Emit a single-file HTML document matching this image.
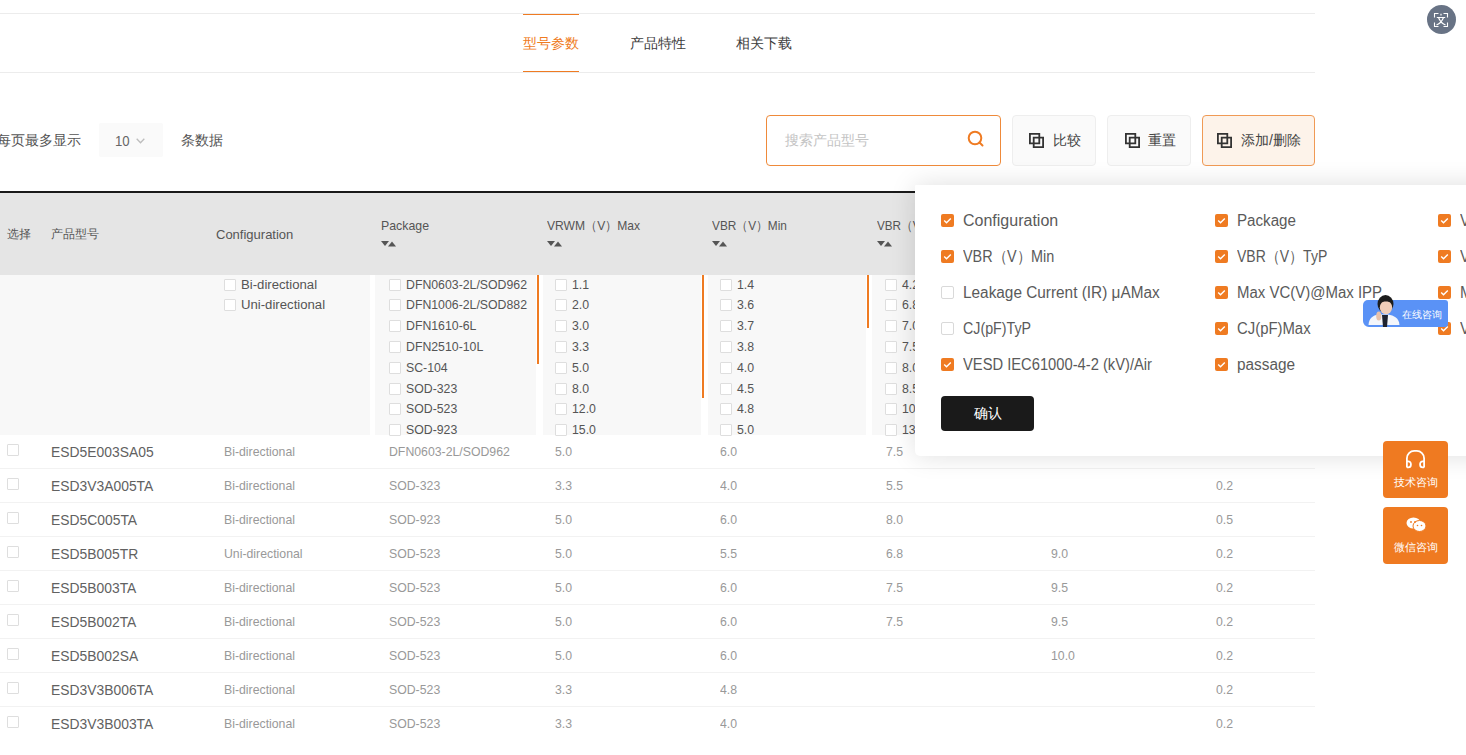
<!DOCTYPE html>
<html><head><meta charset="utf-8"><style>
*{box-sizing:border-box;margin:0;padding:0}
html,body{width:1466px;height:755px;overflow:hidden;background:#fff;font-family:"Liberation Sans",sans-serif;color:#555}
.a{position:absolute;white-space:nowrap}
.hline{position:absolute;height:1px;background:#ececec}
.tab{position:absolute;top:35px;font-size:14px;line-height:16px;color:#3c3c3c}
.tab.on{color:#ef7b22}
.btn{position:absolute;top:115px;height:51px;border:1px solid #eeeeee;border-radius:4px;background:#fafafa;font-size:14px;color:#444}
.btn svg{position:absolute;top:16px}
.btn span{position:absolute;top:16px;line-height:16px;white-space:nowrap}
.htxt{position:absolute;font-size:13px;line-height:15px;color:#555;white-space:nowrap}
.sort{position:absolute;line-height:0}.sort svg{display:block}
.fi{position:absolute;font-size:12.3px;line-height:14px;color:#555;white-space:nowrap}
.cb{position:absolute;width:12px;height:12px;border:1px solid #dedede;background:#fff;border-radius:1px}
.row{position:absolute;left:0;width:1315px;height:34px;border-bottom:1px solid #f2f2f2}
.cell{position:absolute;top:8.8px;font-size:12.8px;line-height:15px;color:#999;transform:scaleX(0.96);transform-origin:0 0;white-space:nowrap}
.model{position:absolute;top:7.5px;left:51px;font-size:15px;line-height:17px;color:#616161;transform:scaleX(0.925);transform-origin:0 0;white-space:nowrap}
.pi{position:absolute;font-size:16px;line-height:18px;color:#5a5a5a;white-space:nowrap}
.pcb{position:absolute;width:13px;height:13px;border-radius:2px;background:#ef7b22}
.pcb.off{background:#fff;border:1px solid #d9d9d9}
.fb{position:absolute;left:1383px;width:65px;height:57px;border-radius:4px;background:#ef7a21;color:#fff;font-size:10px}
</style></head><body>
<div class="hline" style="left:0;top:13px;width:1315px"></div>
<div class="hline" style="left:0;top:72px;width:1315px"></div>
<div class="a" style="left:523px;top:14px;width:56px;height:1px;background:#ef7b22"></div>
<div class="a" style="left:523px;top:71px;width:56px;height:1px;background:#ef7b22"></div>
<div class="tab on" style="left:523px">型号参数</div>
<div class="tab" style="left:630px">产品特性</div>
<div class="tab" style="left:736px">相关下载</div>
<div class="a" style="left:1427px;top:5px;width:29px;height:29px;border-radius:50%;background:#687385"></div>
<svg class="a" style="left:1433px;top:12px" width="16" height="16" viewBox="0 0 16 16" fill="none" stroke="#fff" stroke-width="1.1">
<path d="M1.5 5.5V1.5H5.5M10.5 1.5h4v4M14.5 10.5v4h-4M5.5 14.5h-4v-4"/><path d="M8 1.8v1.6M3.8 5.5h8.4M5.6 5.8C7 9.5 9 11.5 12.5 13M10.4 5.8C9 9.5 7 11.5 3.5 13" stroke-width="1.2"/></svg>
<div class="a" style="left:-3px;top:132px;font-size:14px;line-height:16px;color:#555">每页最多显示</div>
<div class="a" style="left:99px;top:123px;width:64px;height:34px;background:#fafafa;border-radius:2px"></div>
<div class="a" style="left:115px;top:131.5px;font-size:15.5px;line-height:18px;color:#666;transform:scaleX(0.85);transform-origin:0 0">10</div>
<svg class="a" style="left:136px;top:138px" width="9" height="6" viewBox="0 0 9 6" fill="none" stroke="#bdbdbd" stroke-width="1.3"><path d="M.7 .8 4.5 4.8 8.3 .8"/></svg>
<div class="a" style="left:181px;top:132px;font-size:14px;line-height:16px;color:#555">条数据</div>
<div class="a" style="left:766px;top:115px;width:235px;height:51px;border:1px solid #ef8a3a;border-radius:4px;background:#fff"></div>
<div class="a" style="left:785px;top:132px;font-size:14px;line-height:16px;color:#c4c4c4">搜索产品型号</div>
<svg class="a" style="left:967px;top:130px" width="18" height="17" viewBox="0 0 18 17" fill="none" stroke="#ef7b22" stroke-width="2"><circle cx="8" cy="8" r="6.3"/><path d="M12.5 12.5 15.5 15.5" stroke-linecap="round"/></svg>
<div class="btn" style="left:1012px;width:84px;"><svg style="left:16px;top:17px" width="15" height="15" viewBox="0 0 15 15" fill="none" stroke="#333" stroke-width="1.8"><path d="M.9 .9h9.4v9.4H.9zM4.7 4.7h9.4v9.4H4.7z"/></svg><span style="left:40px">比较</span></div>
<div class="btn" style="left:1107px;width:84px;"><svg style="left:17px;top:17px" width="15" height="15" viewBox="0 0 15 15" fill="none" stroke="#333" stroke-width="1.8"><path d="M.9 .9h9.4v9.4H.9zM4.7 4.7h9.4v9.4H4.7z"/></svg><span style="left:40px">重置</span></div>
<div class="btn" style="left:1202px;width:113px;border-color:#f09a55;background:#fdf3ea"><svg style="left:14px;top:17px" width="15" height="15" viewBox="0 0 15 15" fill="none" stroke="#333" stroke-width="1.8"><path d="M.9 .9h9.4v9.4H.9zM4.7 4.7h9.4v9.4H4.7z"/></svg><span style="left:38px">添加/删除</span></div>
<div class="a" style="left:0;top:191px;width:1315px;height:2px;background:#1a1a1a"></div>
<div class="a" style="left:0;top:193px;width:1315px;height:82px;background:#e5e5e5"></div>
<div class="a" style="left:0;top:275px;width:1315px;height:160px;background:#f8f8f8"></div>
<div class="htxt" style="left:7px;top:227px;font-size:12px">选择</div>
<div class="htxt" style="left:51px;top:227px;font-size:12px">产品型号</div>
<div class="htxt" style="left:216px;top:227px">Configuration</div>
<div class="htxt" style="left:381px;top:218px;transform:scaleX(0.95);transform-origin:0 0">Package</div>
<div class="sort" style="left:381px;top:240.5px"><svg width="16" height="6" viewBox="0 0 16 6"><path d="M0 0h8L4 5z" fill="#555"/><path d="M7 5.5 11 0.5 15 5.5z" fill="#555"/></svg></div>
<div class="htxt" style="left:547px;top:218px;transform:scaleX(0.93);transform-origin:0 0">VRWM（V）Max</div>
<div class="sort" style="left:547px;top:240.5px"><svg width="16" height="6" viewBox="0 0 16 6"><path d="M0 0h8L4 5z" fill="#555"/><path d="M7 5.5 11 0.5 15 5.5z" fill="#555"/></svg></div>
<div class="htxt" style="left:712px;top:218px;transform:scaleX(0.91);transform-origin:0 0">VBR（V）Min</div>
<div class="sort" style="left:712px;top:240.5px"><svg width="16" height="6" viewBox="0 0 16 6"><path d="M0 0h8L4 5z" fill="#555"/><path d="M7 5.5 11 0.5 15 5.5z" fill="#555"/></svg></div>
<div class="htxt" style="left:877px;top:218px;transform:scaleX(0.9);transform-origin:0 0">VBR（V）TyP</div>
<div class="sort" style="left:877px;top:240.5px"><svg width="16" height="6" viewBox="0 0 16 6"><path d="M0 0h8L4 5z" fill="#555"/><path d="M7 5.5 11 0.5 15 5.5z" fill="#555"/></svg></div>
<div class="htxt" style="left:1042px;top:218px;transform:scaleX(1);transform-origin:0 0">VC</div>
<div class="sort" style="left:1042px;top:240.5px"><svg width="16" height="6" viewBox="0 0 16 6"><path d="M0 0h8L4 5z" fill="#555"/><path d="M7 5.5 11 0.5 15 5.5z" fill="#555"/></svg></div>
<div class="htxt" style="left:1207px;top:218px;transform:scaleX(1);transform-origin:0 0">IPP</div>
<div class="sort" style="left:1207px;top:240.5px"><svg width="16" height="6" viewBox="0 0 16 6"><path d="M0 0h8L4 5z" fill="#555"/><path d="M7 5.5 11 0.5 15 5.5z" fill="#555"/></svg></div>
<div class="a" style="left:369.5px;top:275px;width:5px;height:160px;background:#fff"></div>
<div class="a" style="left:536px;top:275px;width:6.5px;height:160px;background:#fff"></div>
<div class="a" style="left:701px;top:275px;width:6.5px;height:160px;background:#fff"></div>
<div class="a" style="left:865.5px;top:275px;width:6.5px;height:160px;background:#fff"></div>
<div class="a" style="left:1031px;top:275px;width:6.5px;height:160px;background:#fff"></div>
<div class="a" style="left:536.5px;top:275px;width:2px;height:89px;background:#ef7b22"></div>
<div class="a" style="left:702px;top:275px;width:2px;height:123px;background:#ef7b22"></div>
<div class="a" style="left:867px;top:275px;width:2px;height:53px;background:#ef7b22"></div>
<div class="cb" style="left:224px;top:278.5px"></div>
<div class="fi" style="left:241px;top:277.5px;transform:scaleX(1.07);transform-origin:0 0">Bi-directional</div>
<div class="cb" style="left:224px;top:299.3px"></div>
<div class="fi" style="left:241px;top:298.3px;transform:scaleX(1.07);transform-origin:0 0">Uni-directional</div>
<div class="cb" style="left:389px;top:278.5px"></div>
<div class="fi" style="left:406px;top:277.5px;transform:scaleX(1.0);transform-origin:0 0">DFN0603-2L/SOD962</div>
<div class="cb" style="left:389px;top:299.3px"></div>
<div class="fi" style="left:406px;top:298.3px;transform:scaleX(1.0);transform-origin:0 0">DFN1006-2L/SOD882</div>
<div class="cb" style="left:389px;top:320.1px"></div>
<div class="fi" style="left:406px;top:319.1px;transform:scaleX(1.0);transform-origin:0 0">DFN1610-6L</div>
<div class="cb" style="left:389px;top:340.9px"></div>
<div class="fi" style="left:406px;top:339.9px;transform:scaleX(1.0);transform-origin:0 0">DFN2510-10L</div>
<div class="cb" style="left:389px;top:361.7px"></div>
<div class="fi" style="left:406px;top:360.7px;transform:scaleX(1.0);transform-origin:0 0">SC-104</div>
<div class="cb" style="left:389px;top:382.5px"></div>
<div class="fi" style="left:406px;top:381.5px;transform:scaleX(1.0);transform-origin:0 0">SOD-323</div>
<div class="cb" style="left:389px;top:403.3px"></div>
<div class="fi" style="left:406px;top:402.3px;transform:scaleX(1.0);transform-origin:0 0">SOD-523</div>
<div class="cb" style="left:389px;top:424.1px"></div>
<div class="fi" style="left:406px;top:423.1px;transform:scaleX(1.0);transform-origin:0 0">SOD-923</div>
<div class="cb" style="left:555px;top:278.5px"></div>
<div class="fi" style="left:572px;top:277.5px;transform:scaleX(1.0);transform-origin:0 0">1.1</div>
<div class="cb" style="left:555px;top:299.3px"></div>
<div class="fi" style="left:572px;top:298.3px;transform:scaleX(1.0);transform-origin:0 0">2.0</div>
<div class="cb" style="left:555px;top:320.1px"></div>
<div class="fi" style="left:572px;top:319.1px;transform:scaleX(1.0);transform-origin:0 0">3.0</div>
<div class="cb" style="left:555px;top:340.9px"></div>
<div class="fi" style="left:572px;top:339.9px;transform:scaleX(1.0);transform-origin:0 0">3.3</div>
<div class="cb" style="left:555px;top:361.7px"></div>
<div class="fi" style="left:572px;top:360.7px;transform:scaleX(1.0);transform-origin:0 0">5.0</div>
<div class="cb" style="left:555px;top:382.5px"></div>
<div class="fi" style="left:572px;top:381.5px;transform:scaleX(1.0);transform-origin:0 0">8.0</div>
<div class="cb" style="left:555px;top:403.3px"></div>
<div class="fi" style="left:572px;top:402.3px;transform:scaleX(1.0);transform-origin:0 0">12.0</div>
<div class="cb" style="left:555px;top:424.1px"></div>
<div class="fi" style="left:572px;top:423.1px;transform:scaleX(1.0);transform-origin:0 0">15.0</div>
<div class="cb" style="left:720px;top:278.5px"></div>
<div class="fi" style="left:737px;top:277.5px;transform:scaleX(1.0);transform-origin:0 0">1.4</div>
<div class="cb" style="left:720px;top:299.3px"></div>
<div class="fi" style="left:737px;top:298.3px;transform:scaleX(1.0);transform-origin:0 0">3.6</div>
<div class="cb" style="left:720px;top:320.1px"></div>
<div class="fi" style="left:737px;top:319.1px;transform:scaleX(1.0);transform-origin:0 0">3.7</div>
<div class="cb" style="left:720px;top:340.9px"></div>
<div class="fi" style="left:737px;top:339.9px;transform:scaleX(1.0);transform-origin:0 0">3.8</div>
<div class="cb" style="left:720px;top:361.7px"></div>
<div class="fi" style="left:737px;top:360.7px;transform:scaleX(1.0);transform-origin:0 0">4.0</div>
<div class="cb" style="left:720px;top:382.5px"></div>
<div class="fi" style="left:737px;top:381.5px;transform:scaleX(1.0);transform-origin:0 0">4.5</div>
<div class="cb" style="left:720px;top:403.3px"></div>
<div class="fi" style="left:737px;top:402.3px;transform:scaleX(1.0);transform-origin:0 0">4.8</div>
<div class="cb" style="left:720px;top:424.1px"></div>
<div class="fi" style="left:737px;top:423.1px;transform:scaleX(1.0);transform-origin:0 0">5.0</div>
<div class="cb" style="left:885px;top:278.5px"></div>
<div class="fi" style="left:902px;top:277.5px;transform:scaleX(1.0);transform-origin:0 0">4.2</div>
<div class="cb" style="left:885px;top:299.3px"></div>
<div class="fi" style="left:902px;top:298.3px;transform:scaleX(1.0);transform-origin:0 0">6.8</div>
<div class="cb" style="left:885px;top:320.1px"></div>
<div class="fi" style="left:902px;top:319.1px;transform:scaleX(1.0);transform-origin:0 0">7.0</div>
<div class="cb" style="left:885px;top:340.9px"></div>
<div class="fi" style="left:902px;top:339.9px;transform:scaleX(1.0);transform-origin:0 0">7.5</div>
<div class="cb" style="left:885px;top:361.7px"></div>
<div class="fi" style="left:902px;top:360.7px;transform:scaleX(1.0);transform-origin:0 0">8.0</div>
<div class="cb" style="left:885px;top:382.5px"></div>
<div class="fi" style="left:902px;top:381.5px;transform:scaleX(1.0);transform-origin:0 0">8.5</div>
<div class="cb" style="left:885px;top:403.3px"></div>
<div class="fi" style="left:902px;top:402.3px;transform:scaleX(1.0);transform-origin:0 0">10.0</div>
<div class="cb" style="left:885px;top:424.1px"></div>
<div class="fi" style="left:902px;top:423.1px;transform:scaleX(1.0);transform-origin:0 0">13.0</div>
<div class="row" style="top:435px">
<div class="cb" style="left:7px;top:9px"></div>
<div class="model">ESD5E003SA05</div>
<div class="cell" style="left:224px">Bi-directional</div>
<div class="cell" style="left:389px">DFN0603-2L/SOD962</div>
<div class="cell" style="left:555px">5.0</div>
<div class="cell" style="left:720px">6.0</div>
<div class="cell" style="left:886px">7.5</div>
</div>
<div class="row" style="top:469px">
<div class="cb" style="left:7px;top:9px"></div>
<div class="model">ESD3V3A005TA</div>
<div class="cell" style="left:224px">Bi-directional</div>
<div class="cell" style="left:389px">SOD-323</div>
<div class="cell" style="left:555px">3.3</div>
<div class="cell" style="left:720px">4.0</div>
<div class="cell" style="left:886px">5.5</div>
<div class="cell" style="left:1216px">0.2</div>
</div>
<div class="row" style="top:503px">
<div class="cb" style="left:7px;top:9px"></div>
<div class="model">ESD5C005TA</div>
<div class="cell" style="left:224px">Bi-directional</div>
<div class="cell" style="left:389px">SOD-923</div>
<div class="cell" style="left:555px">5.0</div>
<div class="cell" style="left:720px">6.0</div>
<div class="cell" style="left:886px">8.0</div>
<div class="cell" style="left:1216px">0.5</div>
</div>
<div class="row" style="top:537px">
<div class="cb" style="left:7px;top:9px"></div>
<div class="model">ESD5B005TR</div>
<div class="cell" style="left:224px">Uni-directional</div>
<div class="cell" style="left:389px">SOD-523</div>
<div class="cell" style="left:555px">5.0</div>
<div class="cell" style="left:720px">5.5</div>
<div class="cell" style="left:886px">6.8</div>
<div class="cell" style="left:1051px">9.0</div>
<div class="cell" style="left:1216px">0.2</div>
</div>
<div class="row" style="top:571px">
<div class="cb" style="left:7px;top:9px"></div>
<div class="model">ESD5B003TA</div>
<div class="cell" style="left:224px">Bi-directional</div>
<div class="cell" style="left:389px">SOD-523</div>
<div class="cell" style="left:555px">5.0</div>
<div class="cell" style="left:720px">6.0</div>
<div class="cell" style="left:886px">7.5</div>
<div class="cell" style="left:1051px">9.5</div>
<div class="cell" style="left:1216px">0.2</div>
</div>
<div class="row" style="top:605px">
<div class="cb" style="left:7px;top:9px"></div>
<div class="model">ESD5B002TA</div>
<div class="cell" style="left:224px">Bi-directional</div>
<div class="cell" style="left:389px">SOD-523</div>
<div class="cell" style="left:555px">5.0</div>
<div class="cell" style="left:720px">6.0</div>
<div class="cell" style="left:886px">7.5</div>
<div class="cell" style="left:1051px">9.5</div>
<div class="cell" style="left:1216px">0.2</div>
</div>
<div class="row" style="top:639px">
<div class="cb" style="left:7px;top:9px"></div>
<div class="model">ESD5B002SA</div>
<div class="cell" style="left:224px">Bi-directional</div>
<div class="cell" style="left:389px">SOD-523</div>
<div class="cell" style="left:555px">5.0</div>
<div class="cell" style="left:720px">6.0</div>
<div class="cell" style="left:1051px">10.0</div>
<div class="cell" style="left:1216px">0.2</div>
</div>
<div class="row" style="top:673px">
<div class="cb" style="left:7px;top:9px"></div>
<div class="model">ESD3V3B006TA</div>
<div class="cell" style="left:224px">Bi-directional</div>
<div class="cell" style="left:389px">SOD-523</div>
<div class="cell" style="left:555px">3.3</div>
<div class="cell" style="left:720px">4.8</div>
<div class="cell" style="left:1216px">0.2</div>
</div>
<div class="row" style="top:707px;border-bottom:0">
<div class="cb" style="left:7px;top:9px"></div>
<div class="model">ESD3V3B003TA</div>
<div class="cell" style="left:224px">Bi-directional</div>
<div class="cell" style="left:389px">SOD-523</div>
<div class="cell" style="left:555px">3.3</div>
<div class="cell" style="left:720px">4.0</div>
<div class="cell" style="left:1216px">0.2</div>
</div>
<div class="a" style="left:915px;top:185px;width:700px;height:271px;background:#fff;border-radius:1px 0 0 5px;box-shadow:0 0 26px rgba(0,0,0,0.13)"></div>
<div class="pcb" style="left:941px;top:214px"><svg width="13" height="13" viewBox="0 0 13 13" style="position:absolute;left:0;top:0"><path d="M3.2 6.6 5.5 8.8 9.8 4.5" fill="none" stroke="#fff" stroke-width="1.4"/></svg></div>
<div class="pi" style="left:963px;top:211.5px;transform:scaleX(1.0);transform-origin:0 0">Configuration</div>
<div class="pcb" style="left:1215px;top:214px"><svg width="13" height="13" viewBox="0 0 13 13" style="position:absolute;left:0;top:0"><path d="M3.2 6.6 5.5 8.8 9.8 4.5" fill="none" stroke="#fff" stroke-width="1.4"/></svg></div>
<div class="pi" style="left:1237px;top:211.5px;transform:scaleX(0.947);transform-origin:0 0">Package</div>
<div class="pcb" style="left:1438px;top:214px"><svg width="13" height="13" viewBox="0 0 13 13" style="position:absolute;left:0;top:0"><path d="M3.2 6.6 5.5 8.8 9.8 4.5" fill="none" stroke="#fff" stroke-width="1.4"/></svg></div>
<div class="pi" style="left:1460px;top:211.5px;transform:scaleX(0.93);transform-origin:0 0">VRWM（V）Max</div>
<div class="pcb" style="left:941px;top:250px"><svg width="13" height="13" viewBox="0 0 13 13" style="position:absolute;left:0;top:0"><path d="M3.2 6.6 5.5 8.8 9.8 4.5" fill="none" stroke="#fff" stroke-width="1.4"/></svg></div>
<div class="pi" style="left:963px;top:247.5px;transform:scaleX(0.9);transform-origin:0 0">VBR（V）Min</div>
<div class="pcb" style="left:1215px;top:250px"><svg width="13" height="13" viewBox="0 0 13 13" style="position:absolute;left:0;top:0"><path d="M3.2 6.6 5.5 8.8 9.8 4.5" fill="none" stroke="#fff" stroke-width="1.4"/></svg></div>
<div class="pi" style="left:1237px;top:247.5px;transform:scaleX(0.875);transform-origin:0 0">VBR（V）TyP</div>
<div class="pcb" style="left:1438px;top:250px"><svg width="13" height="13" viewBox="0 0 13 13" style="position:absolute;left:0;top:0"><path d="M3.2 6.6 5.5 8.8 9.8 4.5" fill="none" stroke="#fff" stroke-width="1.4"/></svg></div>
<div class="pi" style="left:1460px;top:247.5px;transform:scaleX(0.93);transform-origin:0 0">VC</div>
<div class="pcb off" style="left:941px;top:286px"></div>
<div class="pi" style="left:963px;top:283.5px;transform:scaleX(0.96);transform-origin:0 0">Leakage Current (IR) μAMax</div>
<div class="pcb" style="left:1215px;top:286px"><svg width="13" height="13" viewBox="0 0 13 13" style="position:absolute;left:0;top:0"><path d="M3.2 6.6 5.5 8.8 9.8 4.5" fill="none" stroke="#fff" stroke-width="1.4"/></svg></div>
<div class="pi" style="left:1237px;top:283.5px;transform:scaleX(0.936);transform-origin:0 0">Max VC(V)@Max IPP</div>
<div class="pcb" style="left:1438px;top:286px"><svg width="13" height="13" viewBox="0 0 13 13" style="position:absolute;left:0;top:0"><path d="M3.2 6.6 5.5 8.8 9.8 4.5" fill="none" stroke="#fff" stroke-width="1.4"/></svg></div>
<div class="pi" style="left:1460px;top:283.5px;transform:scaleX(0.95);transform-origin:0 0">Max</div>
<div class="pcb off" style="left:941px;top:322px"></div>
<div class="pi" style="left:963px;top:319.5px;transform:scaleX(0.89);transform-origin:0 0">CJ(pF)TyP</div>
<div class="pcb" style="left:1215px;top:322px"><svg width="13" height="13" viewBox="0 0 13 13" style="position:absolute;left:0;top:0"><path d="M3.2 6.6 5.5 8.8 9.8 4.5" fill="none" stroke="#fff" stroke-width="1.4"/></svg></div>
<div class="pi" style="left:1237px;top:319.5px;transform:scaleX(0.93);transform-origin:0 0">CJ(pF)Max</div>
<div class="pcb" style="left:1438px;top:322px"><svg width="13" height="13" viewBox="0 0 13 13" style="position:absolute;left:0;top:0"><path d="M3.2 6.6 5.5 8.8 9.8 4.5" fill="none" stroke="#fff" stroke-width="1.4"/></svg></div>
<div class="pi" style="left:1460px;top:319.5px;transform:scaleX(0.93);transform-origin:0 0">VESD</div>
<div class="pcb" style="left:941px;top:358px"><svg width="13" height="13" viewBox="0 0 13 13" style="position:absolute;left:0;top:0"><path d="M3.2 6.6 5.5 8.8 9.8 4.5" fill="none" stroke="#fff" stroke-width="1.4"/></svg></div>
<div class="pi" style="left:963px;top:355.5px;transform:scaleX(0.92);transform-origin:0 0">VESD IEC61000-4-2 (kV)/Air</div>
<div class="pcb" style="left:1215px;top:358px"><svg width="13" height="13" viewBox="0 0 13 13" style="position:absolute;left:0;top:0"><path d="M3.2 6.6 5.5 8.8 9.8 4.5" fill="none" stroke="#fff" stroke-width="1.4"/></svg></div>
<div class="pi" style="left:1237px;top:355.5px;transform:scaleX(0.96);transform-origin:0 0">passage</div>
<div class="a" style="left:941px;top:396px;width:93px;height:35px;background:#1a1a1a;border-radius:4px;color:#fff;font-size:14px;line-height:35px;text-align:center">确认</div>
<div class="fb" style="top:441px"></div>
<svg class="a" style="left:1405px;top:449px" width="22" height="20" viewBox="0 0 22 20" fill="none" stroke="#fff" stroke-width="1.8"><path d="M1.9 18.5V9.2A7.3 7.3 0 0 1 9.2 1.9h2.6a7.3 7.3 0 0 1 7.3 7.3V18.5"/><path d="M1.9 12.3h1.4a2.6 2.6 0 0 1 2.6 2.6v.9a2.6 2.6 0 0 1-2.6 2.6H1.9M19.1 12.3h-1.4a2.6 2.6 0 0 0-2.6 2.6v.9a2.6 2.6 0 0 0 2.6 2.6h1.4"/></svg>
<div class="a" style="left:1383px;width:65px;text-align:center;top:476px;font-size:10.5px;line-height:12px;color:#fff">技术咨询</div>
<div class="fb" style="top:507px"></div>
<svg class="a" style="left:1406px;top:517px" width="21" height="15" viewBox="0 0 21 15"><ellipse cx="7.5" cy="6" rx="7" ry="5.5" fill="#fff"/><ellipse cx="13.5" cy="9" rx="6.5" ry="5.5" fill="#fff" stroke="#ef7a21" stroke-width="1"/><circle cx="5" cy="5" r="0.9" fill="#ef7a21"/><circle cx="9" cy="5" r="0.9" fill="#ef7a21"/><circle cx="11.5" cy="8.5" r="0.8" fill="#ef7a21"/><circle cx="15.5" cy="8.5" r="0.8" fill="#ef7a21"/></svg>
<div class="a" style="left:1383px;width:65px;text-align:center;top:541px;font-size:10.5px;line-height:12px;color:#fff">微信咨询</div>
<div class="a" style="left:1363px;top:300px;width:85px;height:27px;background:#5a92f6;border-radius:5px 3px 3px 6px"></div>
<div class="a" style="left:1402px;top:308.5px;font-size:10px;line-height:12px;color:#fff">在线咨询</div>
<svg class="a" style="left:1366px;top:292px" width="36" height="36" viewBox="0 0 36 36">
<path d="M2.5 33 C3 26 7 23.5 12 22.5 L22 22.5 C28 23.5 33 26 33.5 33 Z" fill="#f4f6fb"/>
<path d="M16 23 L22 23 L21 35 L17 35 Z" fill="#1e2230"/>
<ellipse cx="19.5" cy="12" rx="8" ry="9" fill="#1c1c1c"/>
<ellipse cx="20" cy="15.5" rx="6.2" ry="6.8" fill="#f0cdb8"/>
<path d="M13.5 11 C15 6 24 6 26 11 C23 9 17 9 13.5 11Z" fill="#1c1c1c"/>
<ellipse cx="12.8" cy="24" rx="2.6" ry="4.5" fill="#e9c2aa"/>
</svg>
</body></html>
